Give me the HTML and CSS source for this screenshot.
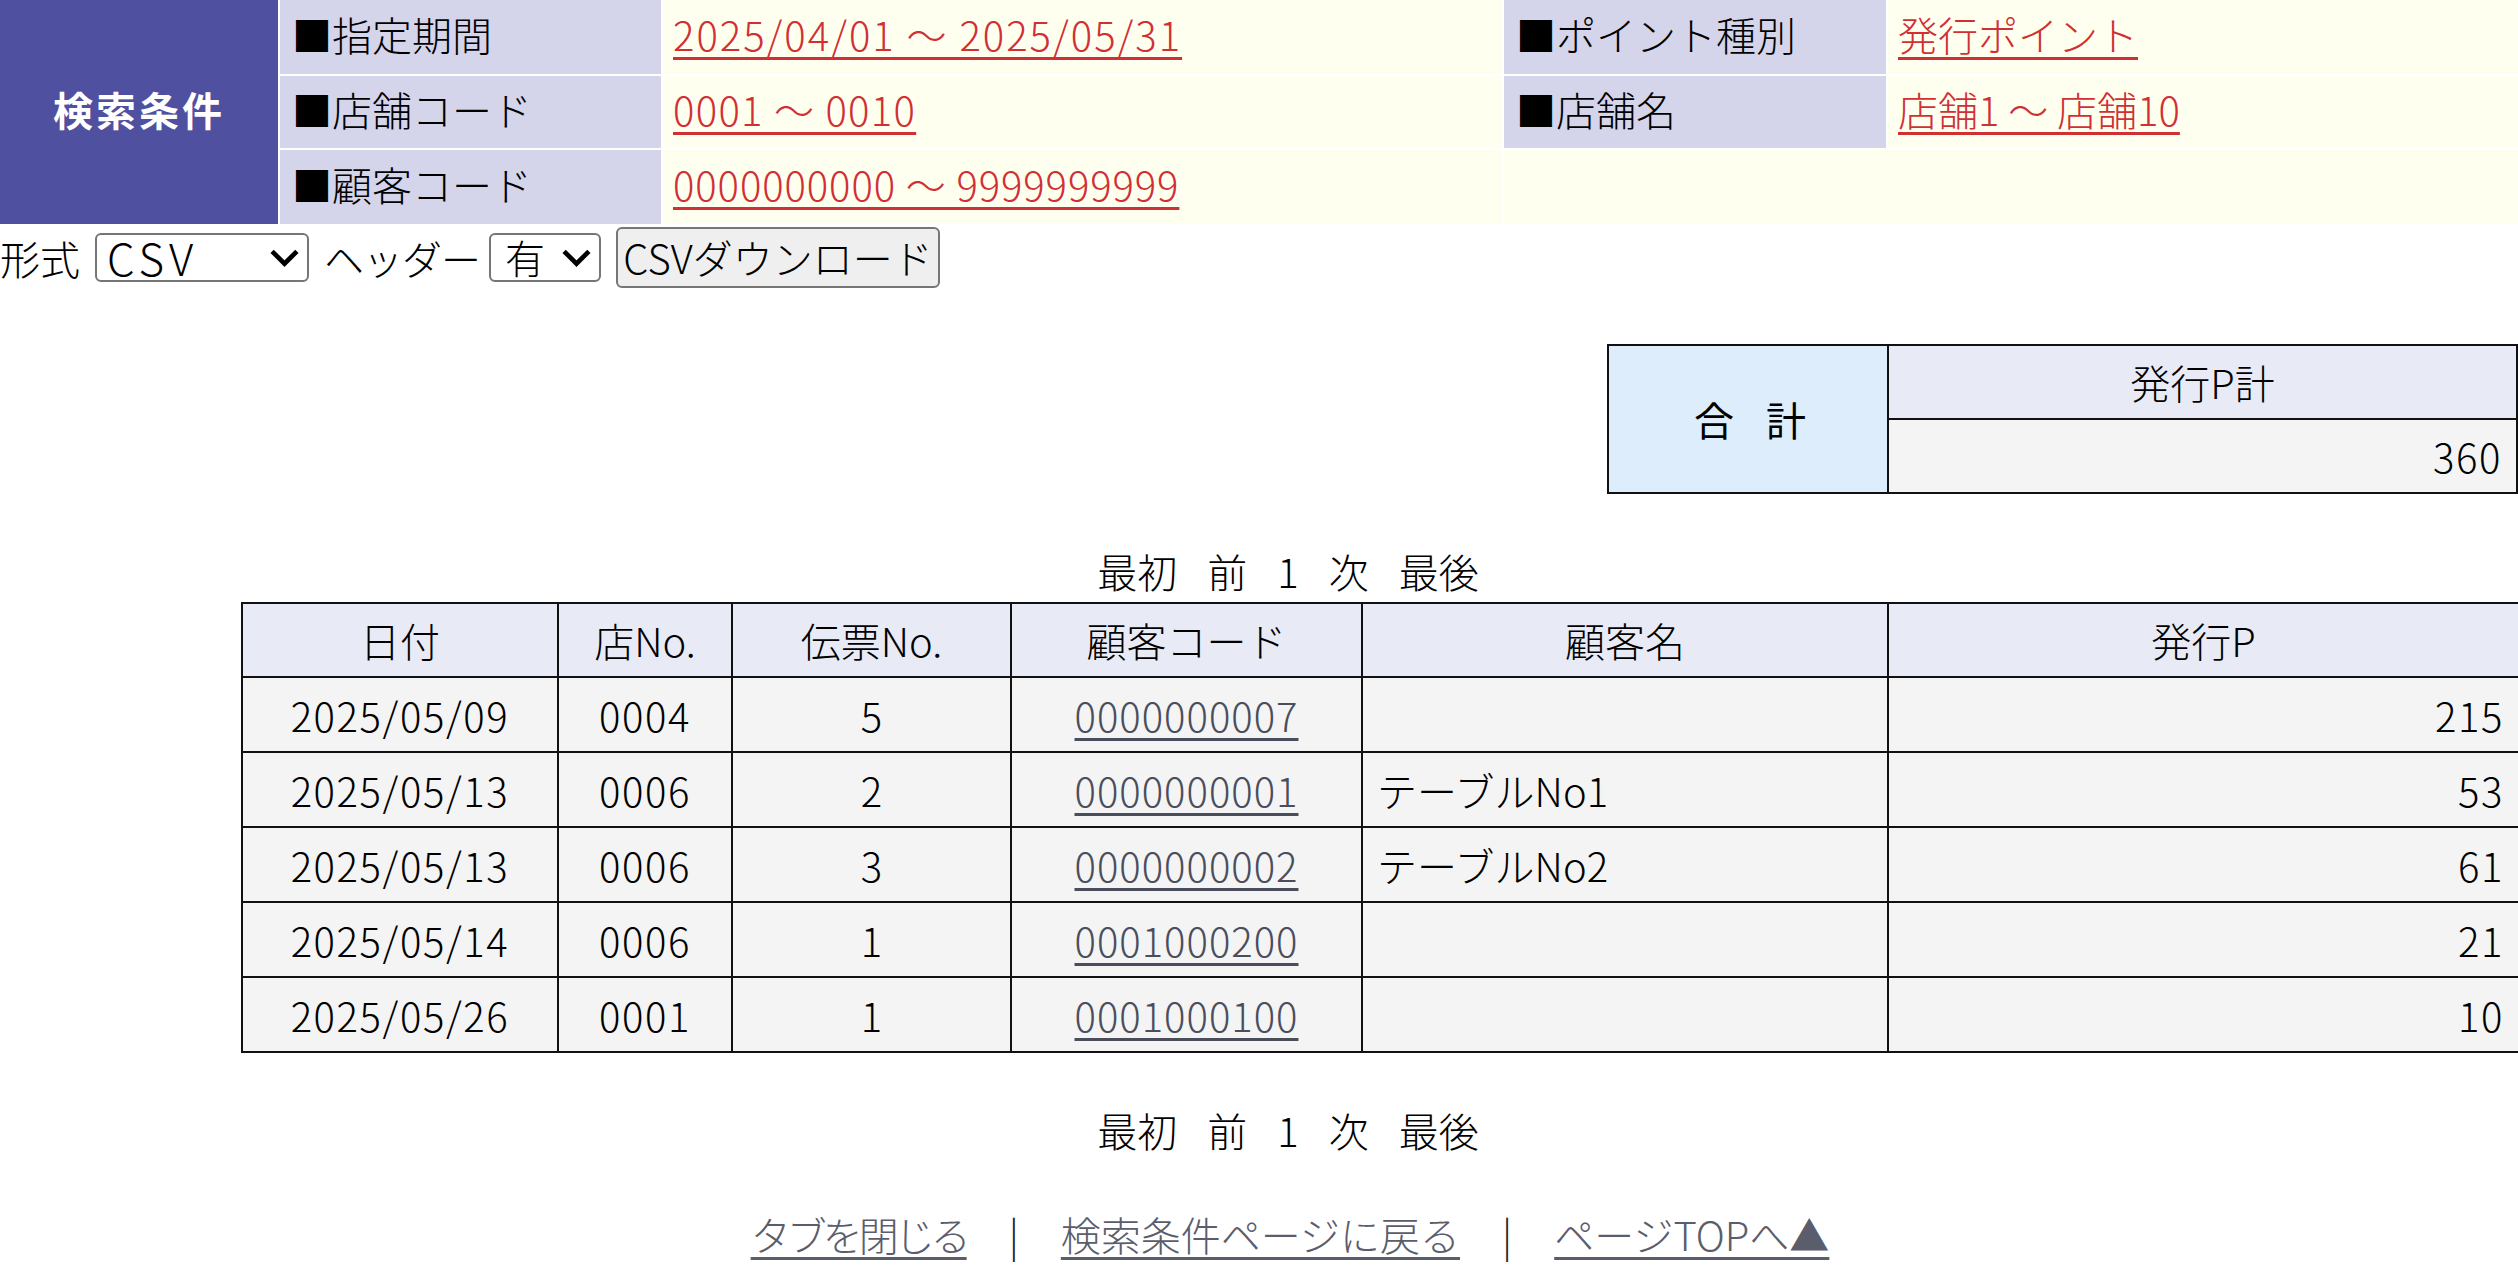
FILE: index.html
```html
<!DOCTYPE html>
<html lang="ja">
<head>
<meta charset="utf-8">
<title>発行ポイント一覧</title>
<link rel="stylesheet" href="styles.css">
</head>
<body>
<div class="cond">
  <div class="cond-title">検索条件</div>
  <div class="cond-label">■指定期間</div>
  <div class="cond-value"><a href="#" class="num num-date">2025/04/01 ～ 2025/05/31</a></div>
  <div class="cond-label">■ポイント種別</div>
  <div class="cond-value"><a href="#">発行ポイント</a></div>
  <div class="cond-label">■店舗コード</div>
  <div class="cond-value"><a href="#" class="num num-store">0001 ～ 0010</a></div>
  <div class="cond-label">■店舗名</div>
  <div class="cond-value"><a href="#">店舗1 ～ 店舗10</a></div>
  <div class="cond-label">■顧客コード</div>
  <div class="cond-value"><a href="#" class="num num-cust">0000000000 ～ 9999999999</a></div>
  <div class="cond-value cond-wide"></div>
</div>

<form class="dl-form">
  <span class="dl-text">形式</span>
  <span class="sel sel-format">
    <select><option>CSV</option><option>TSV</option></select>
    <svg class="chev" viewBox="0 0 30 18" aria-hidden="true"><path d="M3 3 L15 15 L27 3" fill="none" stroke="#000" stroke-width="4.5"/></svg>
  </span>
  <span class="dl-text dl-text-hd">ヘッダー</span>
  <span class="sel sel-header">
    <select><option>有</option><option>無</option></select>
    <svg class="chev" viewBox="0 0 30 18" aria-hidden="true"><path d="M3 3 L15 15 L27 3" fill="none" stroke="#000" stroke-width="4.5"/></svg>
  </span>
  <button type="button" class="dl-btn">CSVダウンロード</button>
</form>

<div class="sum-wrap">
  <table class="sum">
    <tr>
      <th class="sum-title" rowspan="2">合　計</th>
      <th class="sum-head">発行P計</th>
    </tr>
    <tr>
      <td class="sum-val">360</td>
    </tr>
  </table>
</div>

<div class="pager"><span>最初</span><span>前</span><span>1</span><span>次</span><span>最後</span></div>

<table class="list">
  <colgroup>
    <col class="c-date"><col class="c-store"><col class="c-slip"><col class="c-code"><col class="c-name"><col class="c-pt">
  </colgroup>
  <thead>
    <tr><th>日付</th><th>店No.</th><th>伝票No.</th><th>顧客コード</th><th>顧客名</th><th>発行P</th></tr>
  </thead>
  <tbody>
    <tr><td class="ctr num">2025/05/09</td><td class="ctr num">0004</td><td class="ctr">5</td><td class="ctr"><a href="#">0000000007</a></td><td class="lft"></td><td class="rgt num">215</td></tr>
    <tr><td class="ctr num">2025/05/13</td><td class="ctr num">0006</td><td class="ctr">2</td><td class="ctr"><a href="#">0000000001</a></td><td class="lft">テーブルNo1</td><td class="rgt num">53</td></tr>
    <tr><td class="ctr num">2025/05/13</td><td class="ctr num">0006</td><td class="ctr">3</td><td class="ctr"><a href="#">0000000002</a></td><td class="lft">テーブルNo2</td><td class="rgt num">61</td></tr>
    <tr><td class="ctr num">2025/05/14</td><td class="ctr num">0006</td><td class="ctr">1</td><td class="ctr"><a href="#">0001000200</a></td><td class="lft"></td><td class="rgt num">21</td></tr>
    <tr><td class="ctr num">2025/05/26</td><td class="ctr num">0001</td><td class="ctr">1</td><td class="ctr"><a href="#">0001000100</a></td><td class="lft"></td><td class="rgt num">10</td></tr>
  </tbody>
</table>

<div class="pager pager-bottom"><span>最初</span><span>前</span><span>1</span><span>次</span><span>最後</span></div>

<div class="foot">
  <a href="#" class="foot-close">タブを閉じる</a>
  <span class="sep">|</span>
  <a href="#">検索条件ページに戻る</a>
  <span class="sep">|</span>
  <a href="#">ページTOPへ▲</a>
</div>
</body>
</html>
```

FILE: styles.css
```css
html, body {
  margin: 0;
  padding: 0;
  background: #fff;
}
body {
  font-family: "Noto Sans CJK JP", "Liberation Sans", sans-serif;
  font-size: 40px;
  font-weight: 300;
  color: #000;
  overflow-x: hidden;
}
.num { letter-spacing: 1.6px; }

/* condition header */
.cond {
  display: grid;
  grid-template-columns: 278px 381px 839px 382px 1fr;
  grid-template-rows: 74px 72px 74px;
  gap: 2px;
  background: #fff;
}
.cond-title {
  grid-row: 1 / 4;
  grid-column: 1;
  background: #5050a0;
  color: #fff;
  font-weight: 700;
  letter-spacing: 3px;
  display: flex;
  align-items: center;
  justify-content: center;
  padding-bottom: 6px;
}
.cond-label {
  background: #d4d4ea;
  display: flex;
  align-items: center;
  padding-left: 12px;
  padding-bottom: 7px;
}
.cond-value {
  background: #fffff0;
  display: flex;
  align-items: center;
  padding-left: 10px;
  padding-bottom: 7px;
}
.cond-wide {
  grid-column: 4 / 6;
}
.cond-value a {
  color: #d03034;
  text-decoration: underline;
  text-decoration-thickness: 3px;
  text-underline-offset: 6px;
}
.cond-value a.num-date { letter-spacing: 2px; }
.cond-value a.num-store { letter-spacing: 1.3px; }
.cond-value a.num-cust { letter-spacing: 0.9px; }

/* download form */
.dl-form {
  display: flex;
  align-items: center;
  height: 61px;
  margin: 3px 0 0 0;
}
.dl-text {
  margin-right: 15px;
}
.dl-text-hd {
  margin-right: 9px;
  letter-spacing: -1px;
}
.sel {
  position: relative;
  display: inline-block;
  margin-right: 15px;
}
.sel select {
  appearance: none;
  -webkit-appearance: none;
  font-family: "Noto Sans CJK JP", "Liberation Sans", sans-serif;
  font-size: 44px;
  letter-spacing: 5px;
  font-weight: 300;
  color: #000;
  background: #fff;
  border: 2px solid #767676;
  border-radius: 6px;
  height: 49px;
  padding: 0 0 0 10px;
  line-height: 45px;
  display: block;
}
.sel-format select { width: 214px; }
.sel-header select {
  width: 112px;
  padding-left: 14px;
  font-size: 40px;
  letter-spacing: 0;
}
.chev {
  position: absolute;
  top: 15px;
  right: 9px;
  width: 31px;
  height: 19px;
  pointer-events: none;
}
.dl-btn {
  font-family: "Noto Sans CJK JP", "Liberation Sans", sans-serif;
  font-size: 40px;
  font-weight: 300;
  color: #000;
  background: #efefef;
  border: 2px solid #767676;
  border-radius: 6px;
  height: 61px;
  width: 324px;
  padding: 0;
  line-height: 57px;
  white-space: nowrap;
}

/* summary */
.sum-wrap {
  display: flex;
  justify-content: flex-end;
  margin-top: 56px;
}
.sum {
  border-collapse: collapse;
  width: 911px;
  border: 2px solid #111;
}
.sum th, .sum td {
  border: 2px solid #111;
  font-weight: 300;
  padding: 0;
}
.sum-title {
  width: 278px;
  background: #deedfb;
  font-weight: 400 !important;
  text-align: center;
  letter-spacing: -4px;
}
.sum-head {
  background: #e8eaf6;
  height: 72px;
  text-align: center;
}
.sum-val {
  background: #f4f4f4;
  height: 72px;
  text-align: right;
  padding-right: 14px !important;
  letter-spacing: 1.6px;
}

/* pager */
.pager {
  display: flex;
  justify-content: center;
  gap: 30px;
  padding-left: 58px;
  line-height: 58px;
  margin-top: 48px;
  margin-bottom: 2px;
  font-weight: 300;
}
.pager-bottom {
  margin-top: 48px;
  margin-bottom: 0;
}

/* list table */
.list {
  border-collapse: collapse;
  margin-left: 241px;
  width: 2277px;
  table-layout: fixed;
}
.c-date { width: 316px; }
.c-store { width: 174px; }
.c-slip { width: 279px; }
.c-code { width: 351px; }
.c-name { width: 526px; }
.c-pt { width: 631px; }
.list th, .list td {
  border: 2px solid #111;
  padding: 0;
  height: 73px;
  white-space: nowrap;
}
.list th {
  background: #e8eaf6;
  font-weight: 300;
  height: 72px;
  text-align: center;
}
.list td { background: #f4f4f4; }
.ctr { text-align: center; }
.lft { text-align: left; padding-left: 14px !important; }
.rgt { text-align: right; padding-right: 14px !important; }
.list a {
  color: #4a4e5c;
  letter-spacing: 1px;
  text-decoration: underline;
  text-decoration-thickness: 3px;
  text-underline-offset: 6px;
}

/* footer */
.foot {
  display: flex;
  justify-content: center;
  align-items: center;
  gap: 42px;
  padding-left: 62px;
  line-height: 58px;
  margin-top: 46px;
}
.foot a {
  color: #5a5d6c;
  text-decoration: underline;
  text-decoration-thickness: 3px;
  text-underline-offset: 6px;
}
.foot a.foot-close { letter-spacing: -4px; }
.sep { color: #222; }
```
